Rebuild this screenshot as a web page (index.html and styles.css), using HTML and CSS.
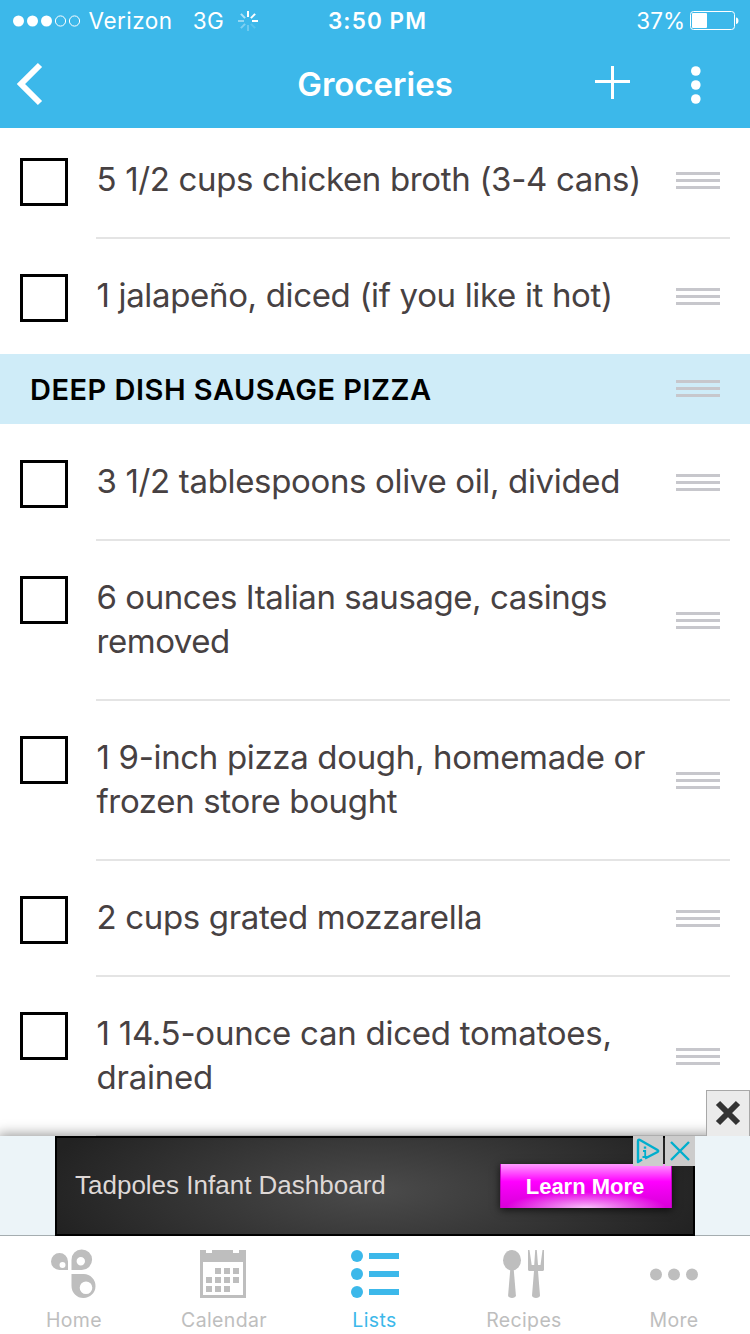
FILE: index.html
```
<!DOCTYPE html>
<html lang="en">
<head>
  <meta charset="UTF-8">
  <meta name="viewport" content="width=device-width, initial-scale=1.0">
  <title>Groceries</title>
  <link rel="stylesheet" href="styles.css">
</head>
<body>
  <header class="header">
    <div class="status-bar">
      <div class="status-left">
        <svg class="signal" width="68" height="12" viewBox="0 0 68 12">
          <g fill="#fff"><circle cx="6.500" cy="6" r="5.500"/><circle cx="20.500" cy="6" r="5.500"/><circle cx="34.500" cy="6" r="5.500"/></g>
          <g fill="none" stroke="#fff"><circle cx="48.500" cy="6" r="5.100"/><circle cx="62.500" cy="6" r="5.100"/></g>
        </svg>
        <span class="carrier">Verizon</span>
        <span class="network">3G</span>
        <svg class="spinner" width="20" height="20" viewBox="0 0 20 20" stroke="#fff" stroke-width="2">
          <path d="M10 0v6"/>
          <path d="M17.1 2.9l-4.2 4.2"/>
          <path d="M20 10h-6"/>
          <path d="M17.1 17.1l-4.2-4.2" opacity=".15"/>
          <path d="M10 20v-6" opacity=".25"/>
          <path d="M2.9 17.1l4.2-4.2" opacity=".35"/>
          <path d="M0 10h6" opacity=".45"/>
          <path d="M2.9 2.9l4.2 4.2" opacity=".6"/>
        </svg>
      </div>
      <span class="time">3:50 PM</span>
      <div class="status-right">
        <span class="percent">37%</span>
        <svg class="battery" width="50" height="20" viewBox="0 0 50 20">
          <rect x=".5" y=".5" width="44" height="18" rx="3" fill="none" stroke="#fff"/>
          <rect x="2" y="2" width="15" height="15" rx="1" fill="#fff"/>
          <path d="M46 6.500c3.300 0 3.300 6.500 0 6.500z" fill="#fff"/>
        </svg>
      </div>
    </div>
    <nav class="nav-bar">
      <svg class="back" width="28" height="44" viewBox="0 0 28 44" fill="none" stroke="#fff" stroke-width="6">
        <path d="M24 2L5 21l19 19"/>
      </svg>
      <h1 class="title">Groceries</h1>
      <div class="actions">
        <svg width="36" height="38" viewBox="0 0 36 38" stroke="#fff" stroke-width="3">
          <path d="M0 15.500h35M17.500 0v33"/>
        </svg>
        <svg class="dots" width="10" height="38" viewBox="0 0 10 38" fill="#fff">
          <circle cx="4.800" cy="5" r="4.800"/><circle cx="4.800" cy="19" r="4.800"/><circle cx="4.800" cy="33" r="4.800"/>
        </svg>
      </div>
    </nav>
  </header>

  <main class="list">
    <div class="item first">
      <span class="checkbox"></span>
      <p class="text">5 1/2 cups chicken broth (3-4 cans)</p>
      <span class="handle"></span>
    </div>
    <div class="item last">
      <span class="checkbox"></span>
      <p class="text">1 jalapeño, diced (if you like it hot)</p>
      <span class="handle"></span>
    </div>
    <div class="section">
      <h2 class="section-title">DEEP DISH SAUSAGE PIZZA</h2>
      <span class="handle"></span>
    </div>
    <div class="item">
      <span class="checkbox"></span>
      <p class="text">3 1/2 tablespoons olive oil, divided</p>
      <span class="handle"></span>
    </div>
    <div class="item">
      <span class="checkbox"></span>
      <p class="text tight">6 ounces Italian sausage, casings<br>removed</p>
      <span class="handle"></span>
    </div>
    <div class="item">
      <span class="checkbox"></span>
      <p class="text">1 9-inch pizza dough, homemade or<br>frozen store bought</p>
      <span class="handle"></span>
    </div>
    <div class="item">
      <span class="checkbox"></span>
      <p class="text">2 cups grated mozzarella</p>
      <span class="handle"></span>
    </div>
    <div class="item">
      <span class="checkbox"></span>
      <p class="text loose">1 14.5-ounce can diced tomatoes,<br>drained</p>
      <span class="handle"></span>
    </div>
  </main>

  <div class="ad-bar">
    <div class="ad-close">
      <svg width="26" height="26" viewBox="0 0 26 26" stroke="#333" stroke-width="6">
        <path d="M3 3l20 20M23 3L3 23"/>
      </svg>
    </div>
    <div class="ad">
      <span class="ad-text">Tadpoles Infant Dashboard</span>
      <span class="ad-button">Learn More</span>
      <div class="ad-choices">
        <span class="choice">
          <svg width="30" height="30" viewBox="0 0 30 30" fill="none" stroke="#00aecd" stroke-width="2.400">
            <path d="M9 23.500L5 26V5c0-1 1-1.500 2-1l17.500 10c1 .600 1 1.400 0 2L12 22.500" stroke-linejoin="round"/>
            <path d="M10 15h2.200v6M9.500 21h5" stroke-width="1.800"/>
            <path d="M12 10.500v2.200" stroke-width="2.400"/>
          </svg>
        </span>
        <span class="choice">
          <svg width="30" height="30" viewBox="0 0 30 30" fill="none" stroke="#00aecd" stroke-width="2.400">
            <path d="M6 6l18 18M24 6L6 24"/>
          </svg>
        </span>
      </div>
    </div>
  </div>

  <footer class="tab-bar">
    <a class="tab">
      <svg width="48" height="48" viewBox="0 0 48 48" fill="#bebebe" fill-rule="evenodd">
        <path d="M18 20H9.500A8.500 8.500 0 1 1 18 11.500zM12.500 12a3 3 0 1 0 0 6 3 3 0 0 0 0-6z"/>
        <path d="M21.500 20V10a10.300 10.300 0 1 1 10.300 10zM30.800 7a4.200 4.200 0 1 0 0 8.400 4.200 4.200 0 0 0 0-8.400z"/>
        <path d="M21.500 24h12.300a12 12 0 1 1-12.300 12zM36 31.500a6.300 6.300 0 1 0 0 12.600 6.300 6.300 0 0 0 0-12.600z"/>
      </svg>
      <span class="tab-label">Home</span>
    </a>
    <a class="tab">
      <svg width="48" height="48" viewBox="0 0 48 48" fill="#bebebe">
        <path fill-rule="evenodd" d="M0 0h6v3h6V0h21v3h6V0h7v48H0zM3 12v33h40V12z"/>
        <path d="M15 18h6v6h-6zM24 18h6v6h-6zM33 18h6v6h-6zM6 27h6v6H6zM15 27h6v6h-6zM24 27h6v6h-6zM33 27h6v6h-6zM6 36h6v6H6zM15 36h6v6h-6zM24 36h6v6h-6z"/>
      </svg>
      <span class="tab-label">Calendar</span>
    </a>
    <a class="tab active">
      <svg width="48" height="48" viewBox="0 0 48 48" fill="#3cb8ea">
        <circle cx="6" cy="6" r="6"/><circle cx="6" cy="24" r="6"/><circle cx="6" cy="42" r="6"/>
        <path d="M18 3h30v6H18zM18 21h30v6H18zM18 39h30v6H18z"/>
      </svg>
      <span class="tab-label">Lists</span>
    </a>
    <a class="tab">
      <svg width="48" height="48" viewBox="0 0 48 48" fill="#bebebe">
        <ellipse cx="12" cy="10.300" rx="9" ry="10.300"/>
        <path d="M10.300 19h3.400l2.200 26.500c0 3.300-7.800 3.300-7.800 0z"/>
        <path d="M28 0h1.500l2.200 15h2.500L35.200 0h1.600l1.200 15h2.500L42.500 0H44v19.500c0 .900-.600 1.500-1.500 1.500H38l2 24.500c0 3.300-8 3.300-8 0L34 21h-4.500c-.900 0-1.500-.600-1.500-1.500z"/>
      </svg>
      <span class="tab-label">Recipes</span>
    </a>
    <a class="tab">
      <svg width="48" height="48" viewBox="0 0 48 48" fill="#bebebe">
        <circle cx="6" cy="24.500" r="6"/><circle cx="24" cy="24.500" r="6"/><circle cx="42" cy="24.500" r="6"/>
      </svg>
      <span class="tab-label">More</span>
    </a>
  </footer>
</body>
</html>
```
FILE: styles.css
```
* {
  box-sizing: border-box;
}

body {
  margin: 0;
  width: 750px;
  height: 1334px;
  display: flex;
  flex-direction: column;
  overflow: hidden;
  background-color: #fff;
  font-family: Inter, "Liberation Sans", sans-serif;
}

svg {
  display: block;
  flex: none;
  overflow: visible;
}

h1, h2, p {
  margin: 0;
}

/* Header */
.header {
  height: 128px;
  flex: none;
  background-color: #3cb8ea;
  color: #fff;
}

.status-bar {
  display: grid;
  grid-template-columns: 1fr auto 1fr;
  align-items: center;
  height: 41px;
  padding: 0 10px 0 12px;
  font-size: 22.5px;
  line-height: 41px;
}

.status-left, .status-right {
  display: flex;
  align-items: center;
}

.status-right {
  justify-content: flex-end;
}

.carrier {
  margin-left: 8.5px;
  letter-spacing: 0.5px;
}

.network {
  margin-left: 20px;
  letter-spacing: 0.5px;
}

.spinner {
  margin-left: 13.5px;
}

.time {
  margin-left: 3px;
  font-weight: 600;
  letter-spacing: 1.1px;
}

.battery {
  margin-left: 5px;
}

.nav-bar {
  display: grid;
  grid-template-columns: 1fr auto 1fr;
  align-items: center;
  height: 87px;
  padding: 0 49px 0 16px;
}

.title {
  margin-left: 33px;
  font-size: 33px;
  font-weight: 600;
  line-height: 87px;
}

.actions {
  display: flex;
  justify-content: flex-end;
  gap: 60px;
}

/* Grocery list */
.list {
  flex: 1;
  min-height: 0;
}

.item {
  position: relative;
  display: flex;
  align-items: center;
  padding: 36px 30px 36px 20px;
}

.item.first {
  padding-top: 30px;
}

.item::after {
  content: "";
  position: absolute;
  left: 96px;
  right: 20px;
  bottom: -1px;
  height: 2px;
  background-color: #e4e4e4;
}

.item.last::after {
  display: none;
}

.checkbox {
  flex: none;
  align-self: flex-start;
  width: 48px;
  height: 48px;
  margin-bottom: -4px;
  border: 3px solid #000;
}

.text {
  flex: 1;
  margin: -1px 0 1px 28.5px;
  color: #474142;
  font-size: 33px;
  line-height: 44px;
  letter-spacing: -0.34px;
  white-space: nowrap;
}

.text.tight {
  letter-spacing: -0.45px;
}

.text.loose {
  letter-spacing: -0.25px;
}

.handle {
  flex: none;
  width: 44px;
  height: 17px;
  border-top: 3px solid #c7c7cc;
  border-bottom: 3px solid #c7c7cc;
  background: linear-gradient(#c7c7cc, #c7c7cc) 0 4px / 44px 3px no-repeat;
}

.section {
  display: flex;
  align-items: center;
  justify-content: space-between;
  height: 70px;
  padding: 0 30px;
  background-color: #cfecf8;
}

.section .handle {
  margin-top: -2px;
}

.section-title {
  font-size: 29px;
  font-weight: 600;
  letter-spacing: 0.5px;
}

/* Ad banner */
.ad-bar {
  position: relative;
  flex: none;
  display: flex;
  justify-content: center;
  height: 100px;
  background-color: #ecf4f8;
  border-bottom: 1px solid #a5adb0;
  box-shadow: 0 0 12px 2px rgba(0, 0, 0, 0.4);
}

.ad-close {
  position: absolute;
  right: 0;
  top: -46px;
  width: 44px;
  height: 46px;
  display: flex;
  align-items: center;
  justify-content: center;
  padding-bottom: 2px;
  border: 1px solid #a8a8a8;
  border-bottom: none;
  background-color: #ebebeb;
}

.ad {
  position: relative;
  display: flex;
  align-items: center;
  justify-content: space-between;
  width: 640px;
  height: 100px;
  padding: 0 21px 0 18px;
  border: 2px solid #000;
  background: radial-gradient(ellipse 340px 110px at 50% 55%, #4b4b4b, #222);
  font-family: "Liberation Sans", sans-serif;
}

.ad-text {
  margin-top: -2px;
  color: #ded8d6;
  font-size: 26px;
}

.ad-button {
  width: 172px;
  height: 44px;
  padding-right: 2px;
  border: 1px solid #c000c0;
  border-width: 0 1px;
  background:
    radial-gradient(ellipse 80px 16px at 50% 100%, rgba(255, 225, 255, 0.85), rgba(255, 120, 255, 0)),
    linear-gradient(#ff9cff, #ff00ff 40%, #f000f0 60%, #d800d8);
  box-shadow: 0 2px 8px rgba(0, 0, 0, 0.7);
  color: #fff;
  font-size: 22px;
  font-weight: bold;
  line-height: 45px;
  text-align: center;
}

.ad-choices {
  position: absolute;
  top: -2px;
  right: -2px;
  display: flex;
  gap: 2px;
}

.choice {
  background-color: #ccc;
}

/* Bottom tabs */
.tab-bar {
  position: relative;
  flex: none;
  display: grid;
  grid-template-columns: repeat(5, 150px);
  height: 98px;
  background-color: #fff;
}

.tab {
  display: flex;
  flex-direction: column;
  align-items: center;
  padding: 14px 2px 0 0;
  color: #bebebe;
}

.tab.active {
  padding-right: 0;
  color: #3cb8ea;
}

.tab.active .tab-label {
  padding-right: 1px;
}

.tab-label {
  margin-top: 8px;
  font-size: 19.5px;
  line-height: 28px;
  letter-spacing: 0.35px;
}
```
